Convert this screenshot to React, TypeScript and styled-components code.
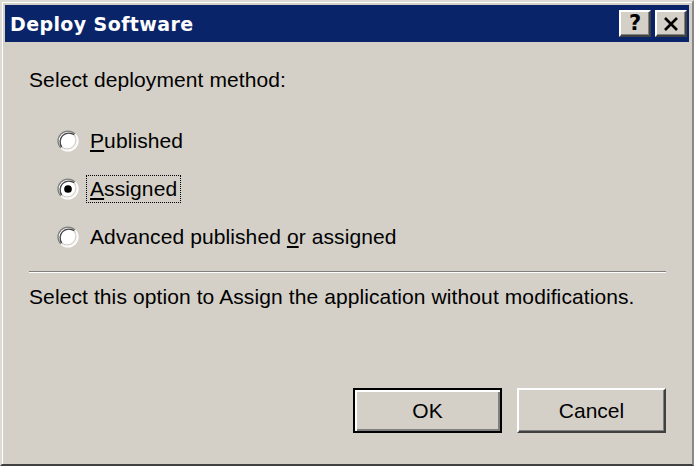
import styled, { createGlobalStyle } from 'styled-components';

const GlobalStyle = createGlobalStyle`
  html, body {
    margin: 0;
    padding: 0;
    background: #d4d0c8;
  }
  * {
    box-sizing: border-box;
  }
`;

const Window = styled.div`
  display: flex;
  flex-direction: column;
  width: 694px;
  height: 466px;
  padding: 3px 3px 2px 3px;
  background: #d4d0c8;
  border: 2px solid;
  border-color: #dcdad4 #8a8884 #404040 #dcdad4;
  box-shadow: inset 1px 1px 0 #ffffff;
  font-family: 'Liberation Sans', Arial, sans-serif;
  color: #000;
`;

const TitleBar = styled.div`
  display: flex;
  align-items: center;
  justify-content: space-between;
  height: 37px;
  padding: 0 2px 0 5px;
  background: #0a246a;
`;

const Title = styled.span`
  font-family: 'DejaVu Sans', Verdana, sans-serif;
  font-weight: 700;
  font-size: 19px;
  color: #ffffff;
  letter-spacing: 0.4px;
`;

const CaptionButtons = styled.div`
  display: flex;
  gap: 4px;
`;

const CaptionButton = styled.div`
  display: flex;
  align-items: center;
  justify-content: center;
  width: 32px;
  height: 27px;
  background: #d4d0c8;
  border: 2px solid;
  border-color: #ffffff #404040 #404040 #ffffff;
  box-shadow: inset -1px -1px 0 #808080;
  font-family: 'DejaVu Sans', Verdana, sans-serif;
  font-weight: 700;
  font-size: 21px;
  line-height: 1;
  color: #000;
`;

const Body = styled.div`
  display: flex;
  flex-direction: column;
  flex: 1;
  padding: 24px 23px 29px 24px;
`;

const TextLine = styled.div<{ $gap?: number }>`
  font-size: 21px;
  line-height: 28px;
  letter-spacing: 0.1px;
  margin-top: ${(p) => p.$gap ?? 0}px;
  white-space: nowrap;
`;

const RadioList = styled.div`
  display: flex;
  flex-direction: column;
  margin-top: 23px;
  padding-left: 28px;
`;

const RadioRow = styled.label`
  display: flex;
  align-items: center;
  gap: 7px;
  height: 48px;
  font-size: 21px;
  letter-spacing: 0.1px;
`;

const RadioLabel = styled.span<{ $focused?: boolean }>`
  padding: 0 3px;
  line-height: 26px;
  border: 1px dotted ${(p) => (p.$focused ? '#000' : 'transparent')};
`;

const Separator = styled.div`
  height: 2px;
  margin-top: 10px;
  border-top: 1px solid #808080;
  border-bottom: 1px solid #ffffff;
`;

const ButtonRow = styled.div`
  display: flex;
  justify-content: flex-end;
  gap: 15px;
  margin-top: auto;
`;

const DialogButton = styled.div<{ $default?: boolean }>`
  display: flex;
  align-items: center;
  justify-content: center;
  width: 149px;
  height: 45px;
  background: #d4d0c8;
  font-size: 21px;
  border: 2px solid;
  border-color: ${(p) => (p.$default ? '#000' : '#ffffff #404040 #404040 #ffffff')};
  box-shadow: ${(p) =>
    p.$default
      ? 'inset 2px 2px 0 #ffffff, inset -2px -2px 0 #808080'
      : 'inset -1px -1px 0 #808080'};
`;

function Radio({ checked }: { checked?: boolean }) {
  return (
    <svg width="22" height="22" viewBox="0 0 20 20">
      <circle cx="10" cy="10" r="8.5" fill="#ffffff" />
      <path d="M3.6 16.4 A9 9 0 0 1 16.4 3.6" fill="none" stroke="#808080" strokeWidth="1.2" />
      <path d="M16.4 3.6 A9 9 0 0 1 3.6 16.4" fill="none" stroke="#ffffff" strokeWidth="1.2" />
      <path d="M4.4 15.6 A8 8 0 0 1 15.6 4.4" fill="none" stroke="#404040" strokeWidth="1.2" />
      <path d="M15.6 4.4 A8 8 0 0 1 4.4 15.6" fill="none" stroke="#d4d0c8" strokeWidth="1.2" />
      {checked && <circle cx="10" cy="10" r="3.5" fill="#000" />}
    </svg>
  );
}

function CloseGlyph() {
  return (
    <svg width="16" height="14" viewBox="0 0 16 14">
      <path d="M2 1 L14 13 M14 1 L2 13" stroke="#000" strokeWidth="2.6" />
    </svg>
  );
}

export default function App() {
  return (
    <>
      <GlobalStyle />
      <Window>
        <TitleBar>
          <Title>Deploy Software</Title>
          <CaptionButtons>
            <CaptionButton>?</CaptionButton>
            <CaptionButton>
              <CloseGlyph />
            </CaptionButton>
          </CaptionButtons>
        </TitleBar>
        <Body>
          <TextLine>Select deployment method:</TextLine>
          <RadioList>
            <RadioRow>
              <Radio />
              <RadioLabel>
                <u>P</u>ublished
              </RadioLabel>
            </RadioRow>
            <RadioRow>
              <Radio checked />
              <RadioLabel $focused>
                <u>A</u>ssigned
              </RadioLabel>
            </RadioRow>
            <RadioRow>
              <Radio />
              <RadioLabel>
                Advanced published <u>o</u>r assigned
              </RadioLabel>
            </RadioRow>
          </RadioList>
          <Separator />
          <TextLine $gap={10}>Select this option to Assign the application without modifications.</TextLine>
          <ButtonRow>
            <DialogButton $default>OK</DialogButton>
            <DialogButton>Cancel</DialogButton>
          </ButtonRow>
        </Body>
      </Window>
    </>
  );
}
